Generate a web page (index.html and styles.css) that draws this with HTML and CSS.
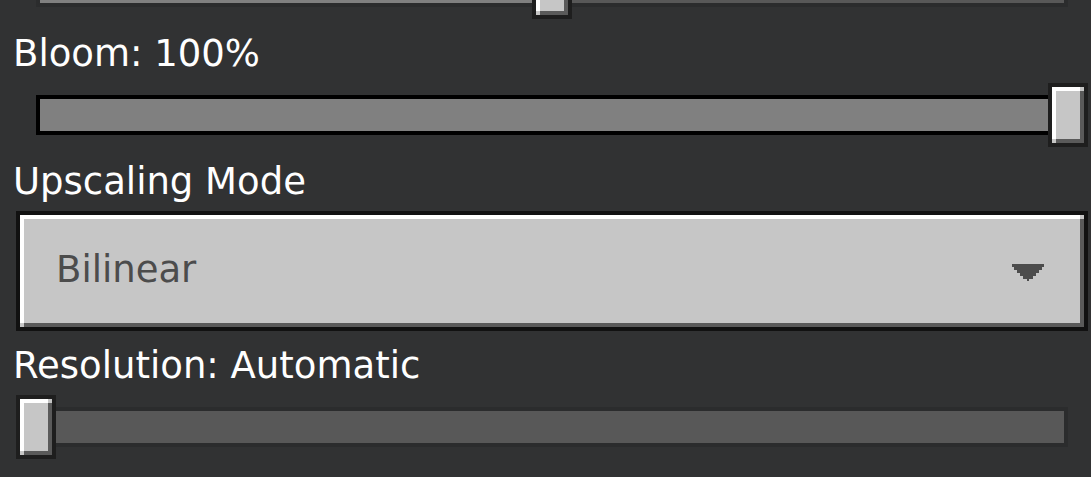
FILE: index.html
```html
<!DOCTYPE html>
<html lang="en">
<head>
<meta charset="utf-8">
<title>Video Settings</title>
<link rel="stylesheet" href="styles.css">
</head>
<body>
<main class="panel">
  <div class="clip-top">
    <div class="slider">
      <div class="rail">
        <div class="track" style="--v:50%"></div>
        <div class="thumb" style="--v:50%"></div>
      </div>
    </div>
  </div>

  <div class="label">Bloom: 100%</div>
  <div class="slider">
    <div class="rail">
      <div class="track track-focus" style="--v:100%"></div>
      <div class="thumb" style="--v:100%"></div>
    </div>
  </div>

  <div class="label">Upscaling Mode</div>
  <div class="dropdown">
    <span class="dropdown-text">Bilinear</span>
    <svg class="arrow" width="32" height="17" viewBox="0 0 32 17" shape-rendering="crispEdges" aria-hidden="true">
      <path fill="#4c4c4c" d="M0 0H32V3H30V6H27V9H24V12H21V15H17V17H15V15H11V12H8V9H5V6H2V3H0Z"/>
    </svg>
  </div>

  <div class="label">Resolution: Automatic</div>
  <div class="slider">
    <div class="rail">
      <div class="track" style="--v:0%"></div>
      <div class="thumb" style="--v:0%"></div>
    </div>
  </div>
</main>
</body>
</html>
```

FILE: styles.css
```css
html, body {
  margin: 0;
  padding: 0;
  background: #313233;
  overflow: hidden;
}

body {
  width: 1091px;
  height: 477px;
  font-family: "DejaVu Sans", "Liberation Sans", sans-serif;
}

.panel {
  display: flex;
  flex-direction: column;
  padding: 0 3px 0 16px;
}

.clip-top {
  height: 19px;
  overflow: hidden;
  display: flex;
  flex-direction: column;
  justify-content: flex-end;
}

.clip-top .slider {
  flex: none;
}

.slider {
  height: 64px;
  padding: 0 20px;
  display: flex;
  align-items: center;
}

.rail {
  position: relative;
  flex: 1;
  height: 40px;
}

.track {
  box-sizing: border-box;
  height: 100%;
  border: 4px solid #2b2c2d;
  background: linear-gradient(to right, #808080 0, #808080 var(--v), #585858 var(--v), #585858 100%);
}

.track-focus {
  border-color: #000;
}

.thumb {
  position: absolute;
  top: -12px;
  left: calc(var(--v) - 20px);
  width: 40px;
  height: 64px;
  box-sizing: border-box;
  border: 4px solid #1e1e1e;
  background:
    linear-gradient(#fff, #fff) left top / calc(100% - 4px) 4px no-repeat,
    linear-gradient(#fff, #fff) left top / 4px calc(100% - 4px) no-repeat,
    linear-gradient(#5a5a5a, #5a5a5a) right bottom / calc(100% - 4px) 4px no-repeat,
    linear-gradient(#5a5a5a, #5a5a5a) right bottom / 4px calc(100% - 4px) no-repeat,
    #c6c6c6;
}

.label {
  height: 58px;
  line-height: 58px;
  padding-top: 6px;
  text-indent: -3px;
  color: #fff;
  font-size: 37px;
  white-space: nowrap;
}

.dropdown {
  height: 120px;
  box-sizing: border-box;
  border: 4px solid #111;
  display: flex;
  align-items: center;
  justify-content: space-between;
  padding: 0 40px 4px 36px;
  background:
    linear-gradient(#fff, #fff) left top / calc(100% - 4px) 4px no-repeat,
    linear-gradient(#fff, #fff) left top / 4px calc(100% - 4px) no-repeat,
    linear-gradient(#5a5a5a, #5a5a5a) right bottom / calc(100% - 4px) 4px no-repeat,
    linear-gradient(#5a5a5a, #5a5a5a) right bottom / 4px calc(100% - 4px) no-repeat,
    #c6c6c6;
}

.dropdown-text {
  color: #4c4c4c;
  font-size: 37px;
}

.arrow {
  display: block;
  margin-top: 6px;
}
```
